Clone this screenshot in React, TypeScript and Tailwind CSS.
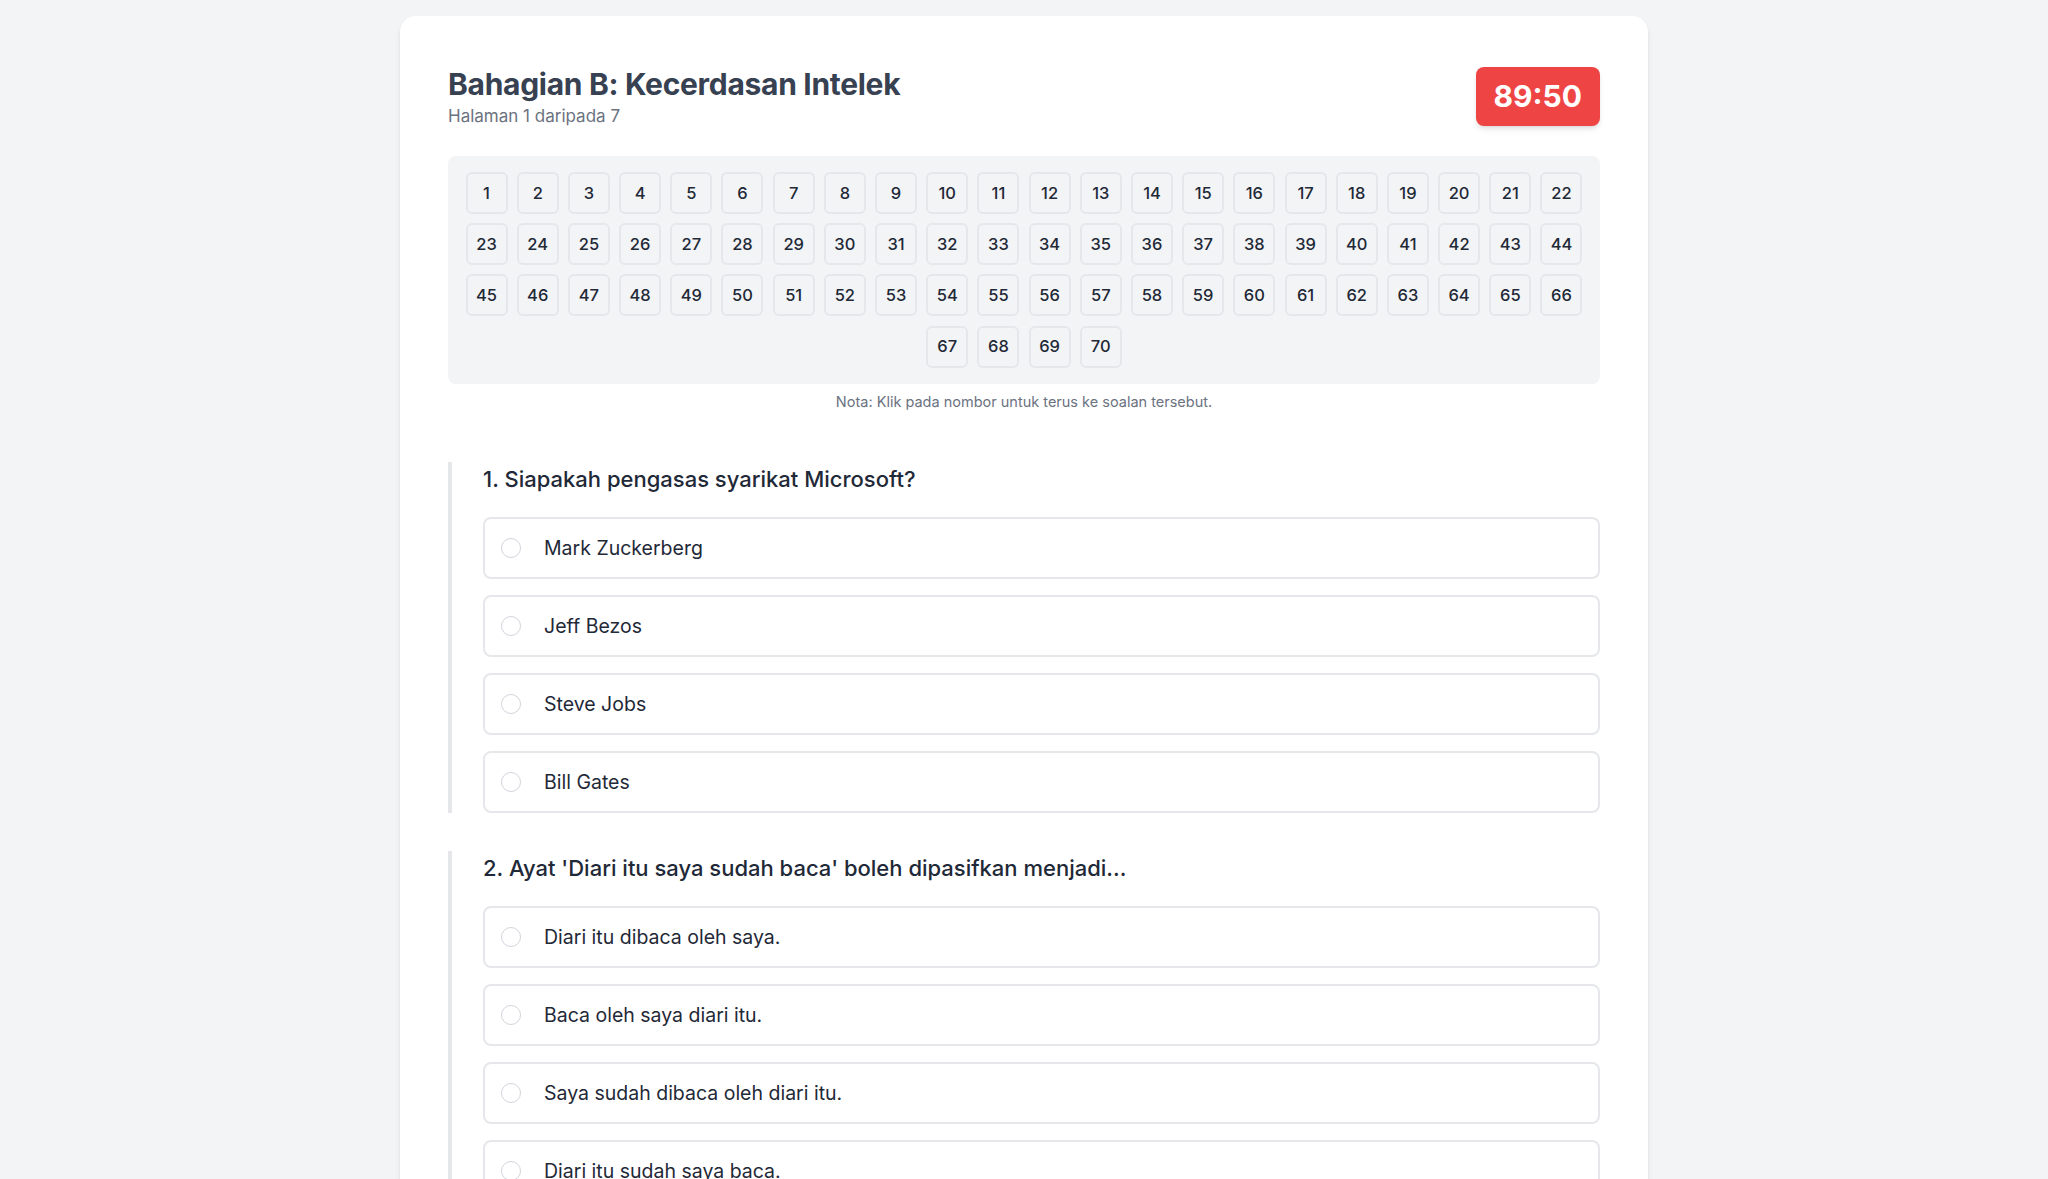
import React, { useState } from "react";

const questions = [
	{
		id: 1,
		text: "Siapakah pengasas syarikat Microsoft?",
		options: ["Mark Zuckerberg", "Jeff Bezos", "Steve Jobs", "Bill Gates"],
	},
	{
		id: 2,
		text: "Ayat 'Diari itu saya sudah baca' boleh dipasifkan menjadi...",
		options: [
			"Diari itu dibaca oleh saya.",
			"Baca oleh saya diari itu.",
			"Saya sudah dibaca oleh diari itu.",
			"Diari itu sudah saya baca.",
		],
	},
];

const numbers = Array.from({ length: 70 }, (_, i) => i + 1);

const App = () => {
	const [answers, setAnswers] = useState<Record<number, number>>({});

	return (
		<div className="min-h-screen bg-[#f3f4f6] font-['Inter','Noto_Sans',sans-serif]">
			<div className="max-w-7xl mx-auto px-4 py-4">
				<div className="bg-white rounded-2xl shadow-md p-12">
					{/* header */}
					<div className="flex items-center justify-between mb-[30px]">
						<div className="pt-[2px]">
							<h1 className="text-3xl font-bold text-[#374151] tracking-[-0.01em]">
								Bahagian B: Kecerdasan Intelek
							</h1>
							<p className="text-[17px] leading-5 text-[#6b7280] mt-1">Halaman 1 daripada 7</p>
						</div>
						<div className="bg-[#ef4444] text-white text-3xl font-bold rounded-lg shadow-md px-[18px] py-[11.5px] mt-[2px]">
							89:50
						</div>
					</div>

					{/* question nav */}
					<div className="bg-[#f3f4f6] rounded-lg p-4">
						<div className="flex flex-wrap justify-center gap-[9.2px]">
							{numbers.map((n) => (
								<button
									key={n}
									className="w-[42px] h-[42px] flex items-center justify-center rounded-md border-2 border-[#e5e7eb] bg-[#f3f4f6] text-[16.5px] font-medium text-[#1f2937]"
								>
									{n}
								</button>
							))}
						</div>
					</div>
					<p className="text-center text-[14.5px] leading-5 text-[#6b7280] mt-2">
						Nota: Klik pada nombor untuk terus ke soalan tersebut.
					</p>

					{/* questions */}
					<div className="mt-[50px]">
						{questions.map((q) => (
							<div key={q.id} className="border-l-4 border-[#e5e7eb] pl-[31px] mb-[38px]">
								<h2 className="text-[22px] leading-7 font-medium text-[#1f2937] pt-[3px] mb-6">
									{q.id}. {q.text}
								</h2>
								<div className="flex flex-col gap-4">
									{q.options.map((opt, i) => (
										<label
											key={opt}
											onClick={() => setAnswers({ ...answers, [q.id]: i })}
											className="flex items-center gap-[23px] border-2 border-[#e5e7eb] rounded-lg px-4 py-[15px] cursor-pointer"
										>
											<span
												className={
													answers[q.id] === i
														? "w-5 h-5 rounded-full border-[6px] border-blue-500"
														: "w-5 h-5 rounded-full border border-[#d1d5db]"
												}
											/>
											<span className="text-[19.5px] text-[#1f2937] leading-7">{opt}</span>
										</label>
									))}
								</div>
							</div>
						))}
					</div>
				</div>
			</div>
		</div>
	);
};

export default App;
